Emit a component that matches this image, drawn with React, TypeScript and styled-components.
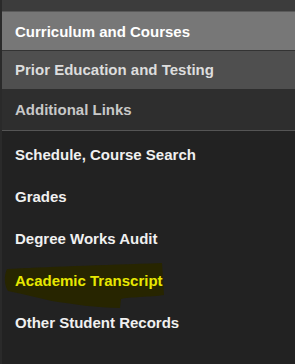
import * as React from 'react';
import styled, { createGlobalStyle } from 'styled-components';

const GlobalStyle = createGlobalStyle`
    html, body {
        margin: 0;
        padding: 0;
        background: #222222;
    }
    body {
        font-family: "Liberation Sans", Arial, sans-serif;
    }
`;

const Sidebar = styled.nav`
    width: 295px;
    height: 364px;
    background: #222222;
    border-left: 2px solid #2a2a2a;
    box-sizing: border-box;
    display: flex;
    flex-direction: column;
    overflow: hidden;
`;

const TopStrip = styled.div`
    height: 11px;
    background: #3c3c3c;
    border-bottom: 1px solid #5a5a5a;
`;

const Section = styled.div<{ $bg: string; $color: string; $height: number; $line: string }>`
    height: ${p => p.$height}px;
    background: ${p => p.$bg};
    border-bottom: 1px solid ${p => p.$line};
    color: ${p => p.$color};
    display: flex;
    align-items: center;
    padding-left: 13px;
    font-size: 15px;
    font-weight: bold;
`;

const LinkList = styled.ul`
    list-style: none;
    margin: 0;
    padding: 2px 0 0 0;
`;

const LinkItem = styled.li<{ $active?: boolean }>`
    position: relative;
    height: 42px;
    display: flex;
    align-items: center;
    padding-left: 13px;
    font-size: 15px;
    font-weight: bold;
    color: ${p => (p.$active ? '#e8e800' : '#f0f0f0')};

    & > span {
        position: relative;
    }
`;

const Marker = styled.svg`
    position: absolute;
    left: 0;
    top: 0;
    width: 170px;
    height: 55px;
`;

const sections = [
    { label: 'Curriculum and Courses', bg: '#777777', color: '#ffffff', height: 38, line: '#333333' },
    { label: 'Prior Education and Testing', bg: '#4f4f4f', color: '#dddddd', height: 37, line: '#4f4f4f' },
    { label: 'Additional Links', bg: '#2e2e2e', color: '#c8c8c8', height: 41, line: '#555555' },
];

const links = [
    'Schedule, Course Search',
    'Grades',
    'Degree Works Audit',
    'Academic Transcript',
    'Other Student Records',
];

const App = () => (
    <>
        <GlobalStyle />
        <Sidebar>
            <TopStrip />
            {sections.map(s => (
                <Section key={s.label} $bg={s.bg} $color={s.color} $height={s.height} $line={s.line}>
                    {s.label}
                </Section>
            ))}
            <LinkList>
                {links.map(l => {
                    let active = l === 'Academic Transcript';
                    return (
                        <LinkItem key={l} $active={active}>
                            {active && (
                                <Marker viewBox="0 0 170 55">
                                    <path
                                        d="M5 10 C40 8 100 6 160 4 L162 36 C150 38 125 38 119 40 L118 49 C95 49 70 45 50 42 L20 35 L6 32 C2 26 2 16 5 10 Z"
                                        fill="#272500"
                                    />
                                </Marker>
                            )}
                            <span>{l}</span>
                        </LinkItem>
                    );
                })}
            </LinkList>
        </Sidebar>
    </>
);

export default App;
